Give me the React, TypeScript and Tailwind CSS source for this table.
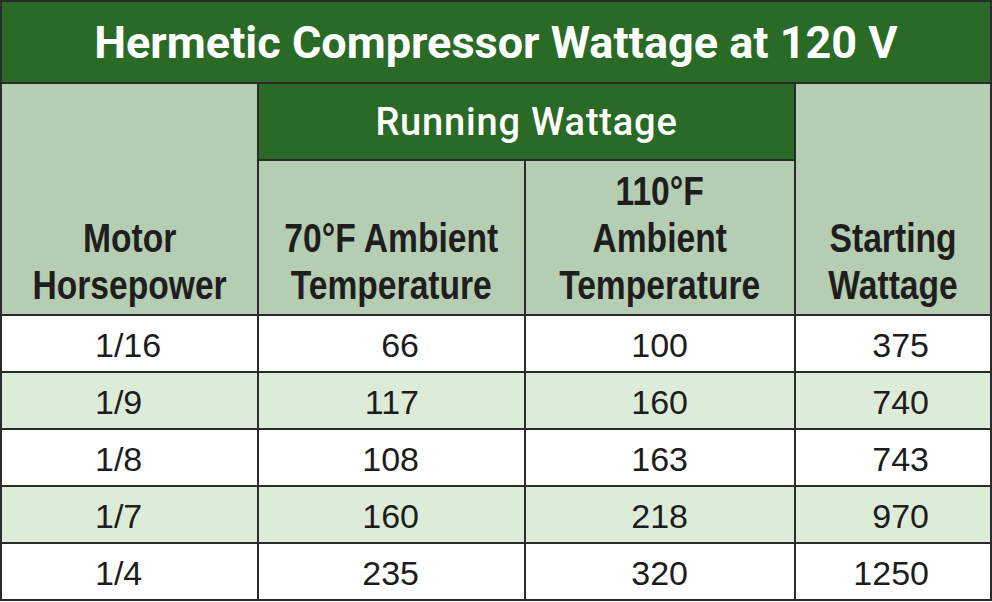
import React from "react";

const rows = [
  ["1/16", "66", "100", "375"],
  ["1/9", "117", "160", "740"],
  ["1/8", "108", "163", "743"],
  ["1/7", "160", "218", "970"],
  ["1/4", "235", "320", "1250"],
];

function HeadCell({ className, lines }: { className: string; lines: string[] }) {
  return (
    <div
      className={`${className} bg-[#b5cdb2] flex items-end justify-center pb-[5px] text-center font-bold text-[40px] leading-[47px] text-[#1e1e1e] font-['Liberation_Sans',Arial,sans-serif]`}
    >
      <div className="scale-x-[0.84] whitespace-nowrap">
        {lines.map((l, i) => (
          <div key={i}>{l}</div>
        ))}
      </div>
    </div>
  );
}

export default function App() {
  return (
    <div className="w-[992px] h-[602px] bg-white">
      <div className="grid w-[992px] h-[601px] bg-[#2b2b2b] p-[2px] gap-[2px] grid-cols-[255px_265px_268px_194px] grid-rows-[80px_75px_153px_repeat(5,55px)]">
        <div className="col-span-4 bg-[#2a6a27] flex items-center justify-center pt-[2px] text-white font-bold text-[45px] font-['Roboto','Noto_Sans',sans-serif]">
          Hermetic Compressor Wattage at 120 V
        </div>
        <HeadCell className="row-span-2 col-start-1 row-start-2" lines={["Motor", "Horsepower"]} />
        <div className="col-span-2 col-start-2 row-start-2 bg-[#2a6a27] flex items-center justify-center pt-[2px] text-white font-medium text-[38px] tracking-[0.8px] font-['Roboto','Noto_Sans',sans-serif]">
          Running Wattage
        </div>
        <HeadCell className="row-span-2 col-start-4 row-start-2" lines={["Starting", "Wattage"]} />
        <HeadCell className="col-start-2 row-start-3" lines={["70°F Ambient", "Temperature"]} />
        <HeadCell className="col-start-3 row-start-3" lines={["110°F", "Ambient", "Temperature"]} />
        {rows.map((r, i) => {
          const bg = i % 2 === 1 ? "bg-[#dcecd8]" : "bg-white";
          const base = `${bg} flex items-center pt-[3px] text-[34px] text-[#1d1d1d] font-['Liberation_Sans',Arial,sans-serif]`;
          return (
            <React.Fragment key={i}>
              <div className={`${base} justify-start pl-[93px]`}>{r[0]}</div>
              <div className={`${base} justify-end pr-[105px]`}>{r[1]}</div>
              <div className={`${base} justify-end pr-[106px]`}>{r[2]}</div>
              <div className={`${base} justify-end pr-[61px]`}>{r[3]}</div>
            </React.Fragment>
          );
        })}
      </div>
    </div>
  );
}
